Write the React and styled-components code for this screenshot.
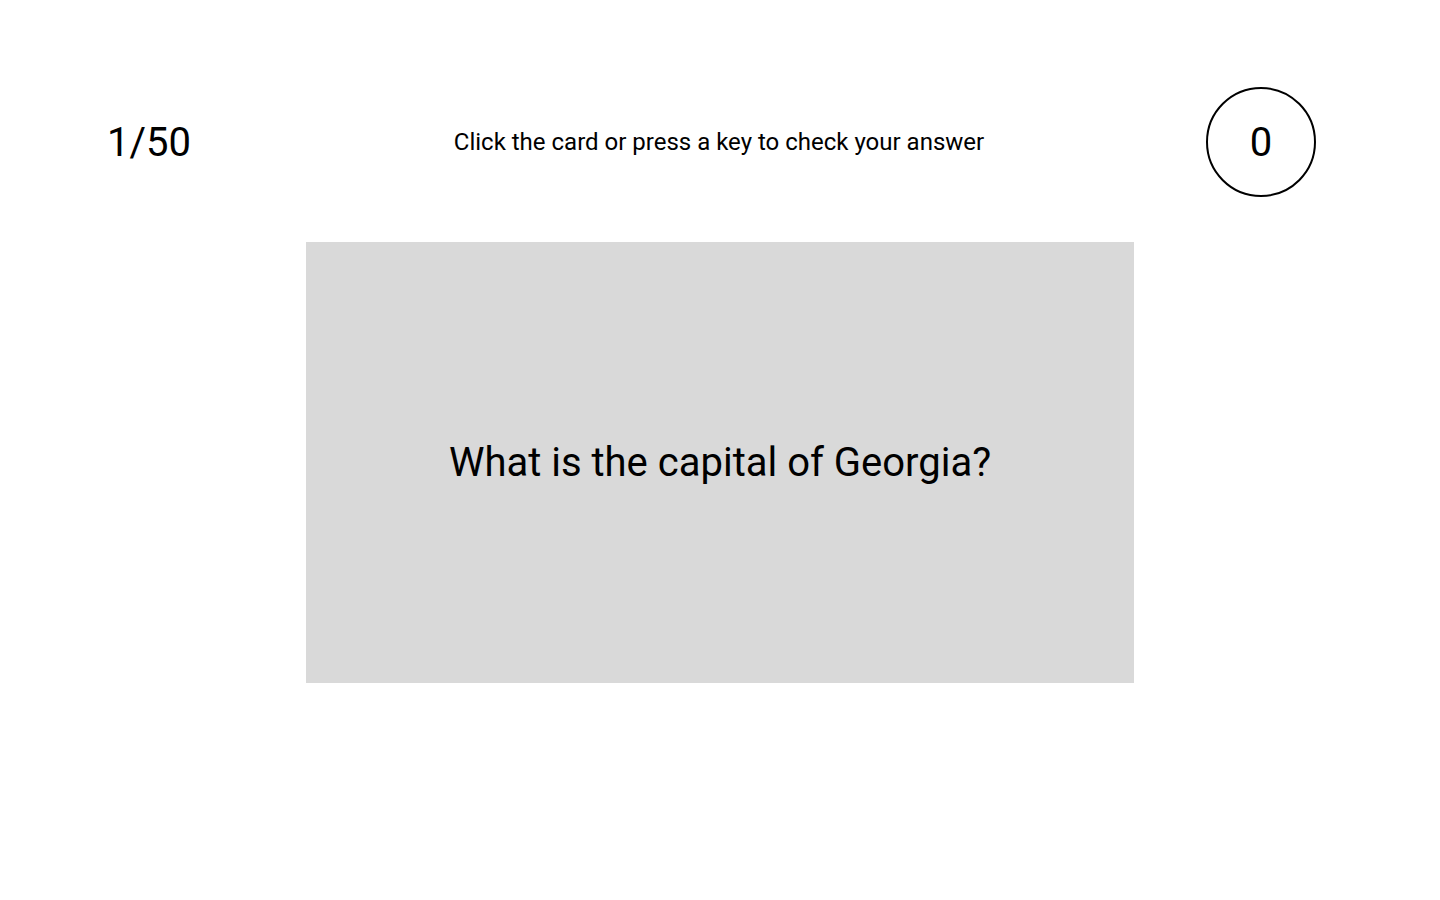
import React from 'react'
import styled, { createGlobalStyle } from 'styled-components'

const GlobalStyle = createGlobalStyle`
  html, body {
    margin: 0;
    padding: 0;
    background: #fff;
  }
  body {
    font-family: Roboto, "Liberation Sans", sans-serif;
    color: #000;
  }
`

const App = () => (
  <Page>
    <GlobalStyle />
    <Header>
      <Counter>1/50</Counter>
      <Hint>Click the card or press a key to check your answer</Hint>
      <Score>0</Score>
    </Header>
    <Card>
      <Question>What is the capital of Georgia?</Question>
    </Card>
  </Page>
)

const Page = styled.main`
  width: 1440px;
  min-height: 900px;
  padding-top: 87px;
  box-sizing: border-box;
  display: flex;
  flex-direction: column;
  align-items: center;
`

const Header = styled.header`
  width: 100%;
  box-sizing: border-box;
  padding: 0 124px 0 107px;
  display: grid;
  grid-template-columns: 1fr auto 1fr;
  align-items: center;
`

const Counter = styled.div`
  justify-self: start;
  font-size: 40px;
  line-height: 1;
  padding-top: 2px;
`

const Hint = styled.p`
  margin: 0 0 0 15px;
  font-size: 24px;
  line-height: 1;
  text-align: center;
`

const Score = styled.div`
  justify-self: end;
  width: 110px;
  height: 110px;
  box-sizing: border-box;
  border: 2.5px solid #000;
  border-radius: 50%;
  display: flex;
  align-items: center;
  justify-content: center;
  font-size: 40px;
`

const Card = styled.section`
  margin-top: 45px;
  width: 828px;
  height: 441px;
  background: #d9d9d9;
  display: flex;
  align-items: center;
  justify-content: center;
  cursor: pointer;
`

const Question = styled.h2`
  margin: 0;
  font-weight: 400;
  font-size: 40px;
  line-height: 1.2;
`

export default App
